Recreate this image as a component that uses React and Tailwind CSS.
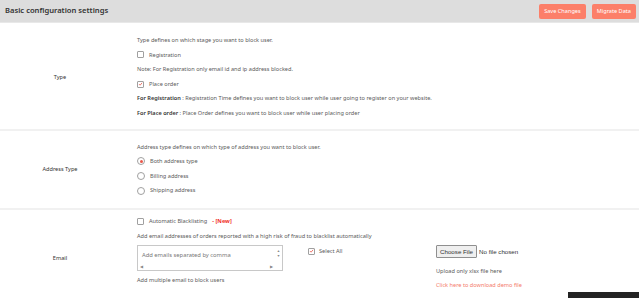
import React from "react";

function Check({ checked }) {
  return (
    <span className="inline-flex h-[7px] w-[7px] items-center justify-center rounded-[1px] border border-[#a0a0a0] bg-white">
      {checked && (
        <svg viewBox="0 0 10 10" className="h-[6px] w-[6px]">
          <path d="M2 5.2 L4.2 7.4 L8.2 2.6" fill="none" stroke="#e8574a" strokeWidth="1.6" />
        </svg>
      )}
    </span>
  );
}

function Radio({ checked }) {
  return (
    <span className="inline-flex h-[8px] w-[8px] items-center justify-center rounded-full border border-[#a0a0a0] bg-white">
      {checked && <span className="h-[3px] w-[3px] rounded-full bg-[#e8574a]" />}
    </span>
  );
}

const line = "flex h-[14.6px] items-center";

export default function App() {
  return (
    <div
      className="relative h-[298px] w-[639px] overflow-hidden bg-white text-[5.6px] text-[#5a5a5a]"
      style={{ fontFamily: "'Noto Sans', 'Open Sans', sans-serif" }}
    >
      {/* Header */}
      <div className="flex h-[23px] items-center justify-between border-b border-[#e8e8e8] bg-[#dddddd] pl-[5px] pr-[3px]">
        <h1 className="text-[7.6px] font-semibold text-[#333]">Basic configuration settings</h1>
        <div className="flex gap-[6px]">
          <button className="h-[15px] rounded-[2px] bg-[#fc7f69] px-[5px] text-[5.6px] text-white">Save Changes</button>
          <button className="h-[15px] rounded-[2px] bg-[#fc7f69] px-[5px] text-[5.6px] text-white">Migrate Data</button>
        </div>
      </div>

      {/* Type */}
      <div className="flex border-b-2 border-[#f1f1f1] pt-[10px] pb-[8px]">
        <div className="flex w-[120px] items-center justify-center text-[#333]">Type</div>
        <div className="pl-[17px]">
          <div className={line}>Type defines on which stage you want to block user.</div>
          <div className={line + " gap-[5px]"}><Check /> Registration</div>
          <div className={line}>Note: For Registration only email id and ip address blocked.</div>
          <div className={line + " gap-[5px]"}><Check checked /> Place order</div>
          <div className={line}>
            <span className="font-semibold text-[#333]">For Registration</span>&nbsp;: Registration Time defines you want to block user while user going to register on your website.
          </div>
          <div className={line}>
            <span className="font-semibold text-[#333]">For Place order</span>&nbsp;: Place Order defines you want to block user while user placing order
          </div>
        </div>
      </div>

      {/* Address Type */}
      <div className="flex border-b-2 border-[#f1f1f1] pt-[9px] pb-[10px]">
        <div className="flex w-[120px] items-center justify-center text-[#333]">Address Type</div>
        <div className="pl-[17px]">
          <div className={line}>Address type defines on which type of address you want to block user.</div>
          <div className={line + " gap-[5px]"}><Radio checked /> Both address type</div>
          <div className={line + " gap-[5px]"}><Radio /> Billing address</div>
          <div className={line + " gap-[5px]"}><Radio /> Shipping address</div>
        </div>
      </div>

      {/* Email */}
      <div className="flex h-[92px] pt-[4px]">
        <div className="flex w-[120px] items-center justify-center text-[#333]">Email</div>
        <div className="pl-[17px]">
          <div className={line + " gap-[5px]"}>
            <Check /> Automatic Blacklisting <span className="font-bold text-[#f0302a]">- [New]</span>
          </div>
          <div className={line}>Add email addresses of orders reported with a high risk of fraud to blacklist automatically</div>
          <div className="flex">
            <div className="w-[171px]">
              <div className="mt-[2px] flex h-[26px] w-[146px] border border-[#c8c8c8] bg-white">
                <div className="flex flex-1 flex-col justify-between">
                  <div className="pl-[4px] pt-[5px] text-[5.8px] text-[#777]">Add emails separated by comma</div>
                  <div className="flex h-[7px] items-center justify-between px-[2px] text-[4px] text-[#888]">
                    <span>◀</span><span>▶</span>
                  </div>
                </div>
                <div className="flex w-[7px] flex-col items-center pt-[2px] text-[3.5px] leading-[5px] text-[#888]">
                  <span>▲</span><span>▼</span>
                </div>
              </div>
              <div className="mt-[4px] flex h-[10px] items-center">Add multiple email to block users</div>
            </div>
            <div className="w-[128px]">
              <div className="flex items-center gap-[4px] pt-[4px]"><Check checked /> Select All</div>
            </div>
            <div>
              <div className="flex items-center gap-[2px] pt-[2px] text-[6.2px] text-[#333]" style={{ fontFamily: "'Liberation Sans', Arial, sans-serif" }}>
                <span className="rounded-[1px] border border-[#8f8f8f] bg-[#efefef] px-[3px] py-[1px]">Choose File</span>
                <span>No file chosen</span>
              </div>
              <div className="mt-[8px] flex h-[10px] items-center">Upload only xlsx file here</div>
              <div className="mt-[4px] flex h-[10px] items-center text-[#f47a6a]">Click here to download demo file</div>
            </div>
          </div>
        </div>
      </div>

      <div className="absolute bottom-0 right-0 h-[6px] w-[71px] bg-[#232323]" />
    </div>
  );
}
